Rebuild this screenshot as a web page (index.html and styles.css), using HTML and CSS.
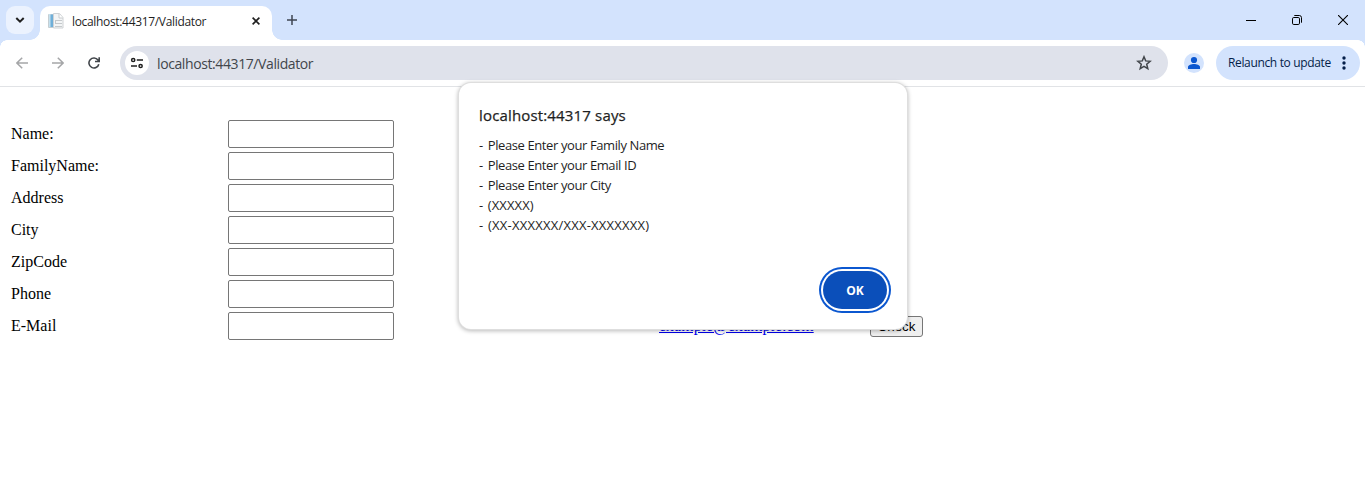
FILE: index.html
```html
<!DOCTYPE html>
<html lang="en">
<head>
<meta charset="utf-8">
<title>localhost:44317/Validator</title>
<link rel="stylesheet" href="styles.css">
</head>
<body>
<header class="tabstrip">
  <div class="tab-search"><svg width="10" height="6" viewBox="0 0 10 6"><path d="M1.3 1 5 4.6 8.7 1" fill="none" stroke="#1f1f1f" stroke-width="2"/></svg></div>
  <div class="tab">
    <svg class="favicon" width="16" height="16" viewBox="0 0 16 16"><path d="M.5 1.5H7v13H.5z" fill="#edf2f5" stroke="#c5ced3"/><path d="M1.5 1.5H5V14H1.5z" fill="#6fafd8"/><path d="M1 1h1.5v13H1z" fill="#c5e1ef"/><path d="M5.5.5h6l3.5 4v10.5H5.5z" fill="#f3f5f6" stroke="#cfd2d5"/><path d="M11 1v4h4" fill="#fff" stroke="#c9cccf"/><path d="M8 7.5h6M8 10.5h6M7 13.5h7M7.5 7v4" stroke="#c5c9cc"/></svg>
    <span class="tab-title">localhost:44317/Validator</span>
    <svg class="tab-close" width="8" height="8" viewBox="0 0 8 8"><path d="m.6.6 6.8 6.8M7.4.6.6 7.4" stroke="#1f1f1f" stroke-width="1.6"/></svg>
  </div>
  <svg class="new-tab" width="10" height="10" viewBox="0 0 10 10"><path d="M5 0v10M0 5h10" stroke="#3f4552" stroke-width="1.5"/></svg>
  <div class="window-controls">
    <svg width="10" height="10" viewBox="0 0 10 10"><path d="M0 5.5h10" stroke="#000"/></svg>
    <svg width="10" height="10" viewBox="0 0 10 10"><rect x=".5" y="2.5" width="7" height="7" rx="1.3" fill="none" stroke="#000"/><path d="M2.3.5h5a2.2 2.2 0 0 1 2.2 2.2v5" fill="none" stroke="#000"/></svg>
    <svg width="10" height="10" viewBox="0 0 10 10"><path d="m0 0 10 10M10 0 0 10" stroke="#000" stroke-width="1.1"/></svg>
  </div>
</header>
<nav class="toolbar">
  <div class="nav-buttons">
    <svg width="12" height="12" viewBox="0 0 12 12"><path d="M12 6H1M6.2.7.9 6l5.3 5.3" fill="none" stroke="#a5a6a8" stroke-width="1.5"/></svg>
    <svg width="12" height="12" viewBox="0 0 12 12"><path d="M0 6h11M5.8.7 11.1 6l-5.3 5.3" fill="none" stroke="#a5a6a8" stroke-width="1.5"/></svg>
    <svg width="12" height="12" viewBox="0 0 12 12"><path d="M10.8 7.2A5 5 0 1 1 10 3l1 1.3M11.2.2v4.3H7" fill="none" stroke="#42464b" stroke-width="1.6"/></svg>
  </div>
  <div class="omnibox">
    <span class="site-info"><svg width="14" height="12" viewBox="0 0 14 12"><g fill="none" stroke="#1f1f1f" stroke-width="1.5"><circle cx="3.2" cy="3" r="1.6"/><path d="M6.8 3H13M1 9h6"/><circle cx="10.6" cy="9" r="1.6"/></g></svg></span>
    <span class="url">localhost:44317/Validator</span>
    <svg class="star" width="16" height="16" viewBox="0 0 16 16"><path d="m8 1.8 1.7 4.1 4.4.4-3.4 2.9 1.1 4.4L8 11.3l-3.8 2.3 1.1-4.4-3.4-2.9 4.4-.4z" fill="none" stroke="#42464b" stroke-width="1.5"/></svg>
  </div>
  <svg class="avatar" width="20" height="20" viewBox="0 0 20 20"><circle cx="10" cy="10" r="10" fill="#d3e3fd"/><circle cx="10" cy="7" r="3.1" fill="#0b57d0"/><path d="M4 16v-2c0-2 3.5-3 6-3s6 1 6 3v2z" fill="#0b57d0"/></svg>
  <div class="relaunch"><span class="relaunch-text">Relaunch to update</span><svg width="4" height="14" viewBox="0 0 4 14" fill="#041e49"><circle cx="2" cy="2" r="1.7"/><circle cx="2" cy="7" r="1.7"/><circle cx="2" cy="12" r="1.7"/></svg></div>
</nav>
<main class="page">
  <form class="form">
    <label>Name:</label><input type="text">
    <label>FamilyName:</label><input type="text">
    <label>Address</label><input type="text">
    <label>City</label><input type="text">
    <label>ZipCode</label><input type="text">
    <label>Phone</label><input type="text">
    <label>E-Mail</label><input type="text"><a class="mail" href="#">example@example.com</a><button class="check" type="button">Check</button>
  </form>
</main>
<section class="dialog">
  <h1 class="dialog-title">localhost:44317 says</h1>
  <div class="messages">
    <div><span class="dash">- </span>Please Enter your Family Name</div>
    <div><span class="dash">- </span>Please Enter your Email ID</div>
    <div><span class="dash">- </span>Please Enter your City</div>
    <div class="zip-format"><span class="dash">- </span>(XXXXX)</div>
    <div class="phone-format"><span class="dash">- </span>(XX-XXXXXX/XXX-XXXXXXX)</div>
  </div>
  <button class="ok" type="button">OK</button>
</section>
</body>
</html>
```
FILE: styles.css
```css
* { box-sizing: border-box; }
body { margin: 0; height: 479px; overflow: hidden; background: #fff; color: #000; }
svg { display: block; flex: none; }
.tabstrip, .toolbar, .dialog { font-family: "Open Sans", "Noto Sans", sans-serif; color: #1f1f1f; white-space: nowrap; }
.tabstrip { display: flex; height: 40px; background: #d3e3fd; }
.tab-search { display: flex; align-items: center; justify-content: center; width: 28px; height: 28px; margin: 6px 6px 0; border-radius: 9px; background: #ebf2fe; }
.tab { position: relative; display: flex; align-items: center; width: 232px; height: 34px; margin-top: 6px; padding: 0 12px 4px 8px; border-radius: 10px 10px 0 0; background: #fff; }
.tab::before, .tab::after { content: ""; position: absolute; bottom: 0; width: 10px; height: 10px; }
.tab::before { right: 100%; background: radial-gradient(circle at 0 0, transparent 9.5px, #fff 10px); }
.tab::after { left: 100%; background: radial-gradient(circle at 100% 0, transparent 9.5px, #fff 10px); }
.tab-title { margin-left: 8px; font-size: 12px; letter-spacing: -0.33px; }
.tab-close { margin-left: auto; }
.new-tab { margin: 15px 0 0 15px; }
.window-controls { display: flex; gap: 36px; margin: 15px 17px 0 auto; }
.toolbar { position: relative; display: flex; align-items: center; height: 47px; border-bottom: 1px solid #e1e3e6; background: #fff; }
.toolbar::before, .toolbar::after { content: ""; position: absolute; top: 0; width: 7px; height: 7px; }
.toolbar::before { left: 0; background: radial-gradient(circle at 100% 100%, transparent 6.5px, #d3e3fd 7px); }
.toolbar::after { right: 0; background: radial-gradient(circle at 0 100%, transparent 6.5px, #d3e3fd 7px); }
.nav-buttons { display: flex; gap: 24px; padding-left: 16px; }
.omnibox { display: flex; align-items: center; width: 1048px; height: 34px; margin-left: 20px; padding: 0 16px 0 5px; border-radius: 17px; background: #dfe2eb; }
.site-info { display: flex; align-items: center; justify-content: center; width: 24px; height: 24px; border-radius: 50%; background: #fff; }
.url { margin-left: 8px; font-size: 14px; letter-spacing: -0.4px; color: #42464b; }
.star { margin-left: auto; }
.avatar { margin-left: 16px; }
.relaunch { display: flex; align-items: center; justify-content: space-between; width: 144px; height: 34px; margin-left: 12px; padding: 0 14px 0 12px; border-radius: 17px; background: #d3e3fd; color: #041e49; }
.relaunch-text { padding-bottom: 1px; font-size: 12px; letter-spacing: -0.35px; }
.page { padding: 33px 11px; font: 16px "Liberation Serif", serif; }
.form { display: grid; grid-template-columns: 217px 431px 211px 53px; grid-auto-rows: 28px; row-gap: 4px; align-items: center; }
.form label { grid-column: 1; }
.form input { grid-column: 2; width: 166px; height: 28px; margin: 0; border: 1px solid #767676; border-radius: 2px; background: #fff; }
.mail { grid-column: 3; justify-self: start; color: #00e; }
.check { width: 53px; height: 21px; padding: 0; border: 1px solid #767676; border-radius: 3px; background: #efefef; font: 13.333px "Liberation Sans", sans-serif; color: #000; }
.dialog { position: absolute; left: 459px; top: 83px; width: 448px; height: 246px; display: flex; flex-direction: column; padding: 20px 20px; border-radius: 12px; background: #fff; box-shadow: 0 0 0 1px #dedede, 0 1px 4px 1px rgba(0,0,0,.28); }
.dialog-title { margin: 0; height: 24px; line-height: 24px; font-size: 15px; font-weight: 500; letter-spacing: 0.16px; -webkit-text-stroke: 0.25px #1f1f1f; }
.messages { margin-top: 8px; font-size: 13px; line-height: 20px; letter-spacing: -0.4px; }
.dash { margin-right: 2px; }
.zip-format { letter-spacing: 0.1px; }
.phone-format { letter-spacing: 0.23px; }
.zip-format .dash, .phone-format .dash { margin-right: 1px; }
.ok { align-self: flex-end; flex: none; width: 64px; height: 38px; margin: 36px 0 0; padding: 0; border: 0; border-radius: 19px; background: #0b4fba; box-shadow: 0 0 0 2px #fff, 0 0 0 4px #0b57d0; color: #fff; font: 700 12px "Open Sans", sans-serif; }
```
